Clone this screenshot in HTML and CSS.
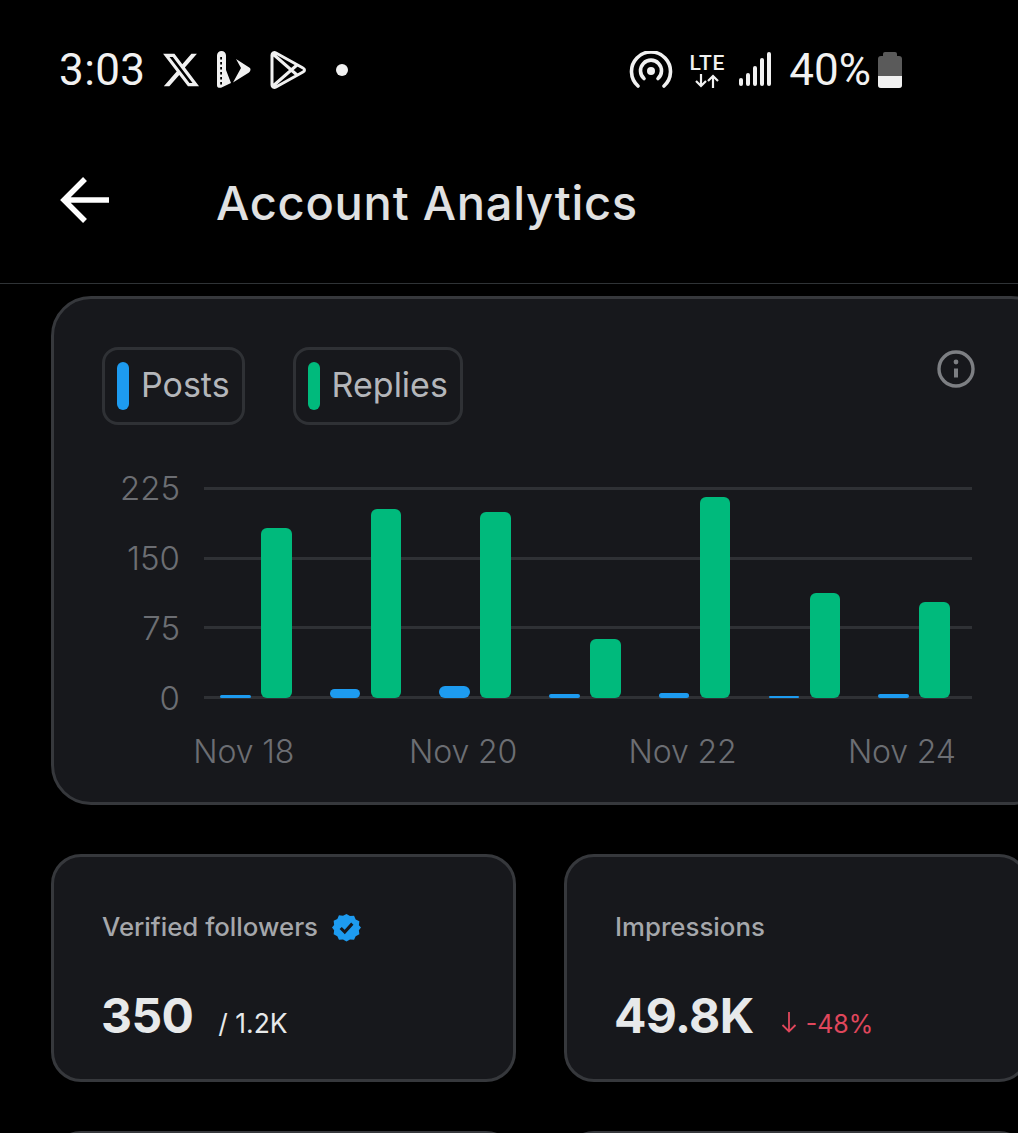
FILE: index.html
```html
<!DOCTYPE html>
<html lang="en">
<head>
<meta charset="utf-8">
<title>Account Analytics</title>
<link rel="stylesheet" href="styles.css">
</head>
<body>
<div class="screen">
  <div class="status">
    <div class="status-left">
      <span class="time">3:03</span>
      <svg class="ic-x" viewBox="0 0 24 24"><path fill="#f1f1f1" d="M18.244 2.25h3.308l-7.227 8.26 8.502 11.24H16.17l-5.214-6.817L4.99 21.75H1.68l7.73-8.835L1.254 2.25H8.08l4.713 6.231zm-1.161 17.52h1.833L7.084 4.126H5.117z"/></svg>
      <svg class="ic-b" viewBox="0 0 36 38"><path fill="#f1f1f1" d="M0 4.500a4.500 4.500 0 0 1 9 0V19l5 13-10 4.800q-4 .5-4-2.500z"/><path fill="#000" d="M3.200 6h1.800v2.500H3.200zM3.200 11h1.800v2.500H3.200zM3.200 16h1.800v2.500H3.200zM3.200 21h1.800v2.500H3.200zM3.200 26h1.800v2.500H3.200zM3.200 31h1.800v2.500H3.200z"/><path fill="#f1f1f1" d="M19 8l14 9c.8 1 .8 3-1 4.500L16 31.500l8-14.500z"/></svg>
      <svg class="ic-play" viewBox="0 0 38 40"><path fill="none" stroke="#f1f1f1" stroke-width="3" stroke-linejoin="round" d="M3 5c0-2 2-3 4-2l27 15c2 1 2 3 0 4L7 37c-2 1-4 0-4-2zM4 4l24 21M4 36l24-21"/></svg>
      <span class="dot"></span>
    </div>
    <div class="status-right">
      <svg class="ic-cast" viewBox="0 0 44 38"><g fill="none" stroke="#f1f1f1" stroke-width="3.600" stroke-linecap="round"><path d="M9 35A19.500 19.500 0 1 1 35 35"/><path d="M15 27.500A10.500 10.500 0 1 1 29 27.500"/></g><circle cx="22" cy="20" r="4" fill="#f1f1f1"/></svg>
      <div class="lte">
        <span class="lte-text">LTE</span>
        <svg class="ic-arrows" viewBox="0 0 26 14"><path fill="none" stroke="#f1f1f1" stroke-width="2.200" d="M7 0v12M2 7l5 5 5-5M19 14V2M14 7l5-5 5 5"/></svg>
      </div>
      <div class="signal"><i class="s1"></i><i class="s2"></i><i class="s3"></i><i class="s4"></i><i class="s5"></i></div>
      <span class="pct">40%</span>
      <div class="battery"><span class="cap"></span><span class="body"><span class="fill"></span></span></div>
    </div>
  </div>

  <header class="topbar">
    <svg class="back" viewBox="0 0 50 46"><path fill="none" stroke="#fff" stroke-width="5.500" d="M49 23H5M25 2 4 23l21 21"/></svg>
    <h1 class="title">Account Analytics</h1>
  </header>

  <main class="content">
    <section class="card chart-card">
      <div class="legend-row">
        <div class="chip"><span class="swatch blue"></span>Posts</div>
        <div class="chip"><span class="swatch green"></span>Replies</div>
        <svg class="info" viewBox="0 0 40 40"><circle cx="20" cy="20" r="17" fill="none" stroke="#7d7f83" stroke-width="3.400"/><circle cx="20" cy="13" r="2.400" fill="#7d7f83"/><path stroke="#7d7f83" stroke-width="4" d="M20 19.500v9"/></svg>
      </div>
      <div class="chart">
        <div class="y-axis"><span>225</span><span>150</span><span>75</span><span>0</span></div>
        <div class="plot">
          <div class="grid-lines"><i></i><i></i><i></i><i></i></div>
          <div class="bars">
            <div class="group"><span class="bar blue" style="height:3px"></span><span class="bar green" style="height:170px"></span></div>
            <div class="group"><span class="bar blue" style="height:9px"></span><span class="bar green" style="height:189px"></span></div>
            <div class="group"><span class="bar blue" style="height:12px"></span><span class="bar green" style="height:186px"></span></div>
            <div class="group"><span class="bar blue" style="height:4px"></span><span class="bar green" style="height:59px"></span></div>
            <div class="group"><span class="bar blue" style="height:5px"></span><span class="bar green" style="height:201px"></span></div>
            <div class="group"><span class="bar blue" style="height:2px"></span><span class="bar green" style="height:105px"></span></div>
            <div class="group"><span class="bar blue" style="height:4px"></span><span class="bar green" style="height:96px"></span></div>
          </div>
        </div>
      </div>
      <div class="x-axis"><span>Nov 18</span><span>Nov 20</span><span>Nov 22</span><span>Nov 24</span></div>
    </section>

    <div class="stats">
      <section class="card stat">
        <div class="stat-label">Verified followers
          <svg class="badge" viewBox="0 0 30 30"><path fill="#1d9bf0" d="M15 1l3.600 2.200 4.200-.4 1.700 3.800 3.800 1.900-.5 4.200L30 15l-2.200 2.900.5 4.200-3.800 1.900-1.700 3.800-4.200-.4L15 29.600l-3.600-2.200-4.200.4-1.700-3.800-3.800-1.900.5-4.200L0 15l2.200-2.700-.5-4.200 3.800-1.900 1.700-3.800 4.200.4z"/><path fill="none" stroke="#17181c" stroke-width="3.200" d="M9 15.500l4.200 4.200L21 11"/></svg>
        </div>
        <div class="stat-value"><span class="num">350</span><span class="sub">/ 1.2K</span></div>
      </section>
      <section class="card stat">
        <div class="stat-label">Impressions</div>
        <div class="stat-value"><span class="num">49.8K</span><span class="delta"><svg class="down" viewBox="0 0 16 21"><path fill="none" stroke="#e0475c" stroke-width="1.800" d="M8 0v19.500M1.500 13 8 19.500 14.500 13"/></svg>-48%</span></div>
      </section>
      <section class="card stat"></section>
      <section class="card stat"></section>
    </div>
  </main>
</div>
</body>
</html>
```

FILE: styles.css
```css
* { box-sizing: border-box; }
html, body { margin: 0; background: #000; }
.screen { width: 1018px; height: 1133px; overflow: hidden; background: #000; font-family: Inter, "Liberation Sans", sans-serif; color: #e7e9ea; }

.status { height: 140px; display: flex; justify-content: space-between; align-items: flex-start; padding: 43px 116px 0 59px; }
.status-left { display: flex; align-items: center; height: 54px; }
.time { font: 400 44px/54px Roboto, sans-serif; color: #f1f1f1; width: 102px; letter-spacing: .4px; }
.ic-x { width: 40px; height: 40px; }
.ic-b { width: 36px; height: 38px; margin-left: 16px; }
.ic-play { width: 38px; height: 40px; margin-left: 16px; }
.dot { width: 12px; height: 12px; border-radius: 50%; background: #f1f1f1; margin-left: 29px; }
.status-right { display: flex; align-items: center; height: 54px; }
.ic-cast { width: 44px; height: 38px; }
.lte { display: flex; flex-direction: column; align-items: center; margin-left: 16px; width: 36px; }
.lte-text { font: 500 21px/20px Roboto, sans-serif; color: #f1f1f1; letter-spacing: .8px; }
.ic-arrows { width: 26px; height: 14px; margin-top: 1px; }
.signal { display: flex; align-items: flex-end; gap: 3px; height: 34px; margin: 0 0 2px 14px; }
.signal i { display: block; width: 4px; background: #f1f1f1; border-radius: 2px; }
.s1 { height: 8px; } .s2 { height: 13px; } .s3 { height: 20px; } .s4 { height: 28px; } .s5 { height: 34px; }
.pct { font: 400 44px/54px Roboto, sans-serif; color: #f1f1f1; margin-left: 18px; }
.battery { display: flex; flex-direction: column; align-items: center; margin-left: 7px; width: 24px; }
.cap { width: 14px; height: 4px; background: #5a5a5a; border-radius: 2px 2px 0 0; }
.body { width: 24px; height: 32px; background: #5a5a5a; border-radius: 3px; overflow: hidden; display: flex; align-items: flex-end; }
.fill { width: 100%; height: 12px; background: #f1f1f1; }

.topbar { height: 144px; border-bottom: 1px solid #2f3336; display: flex; align-items: flex-start; padding: 37px 0 0 60px; }
.back { width: 50px; height: 46px; flex: none; }
.title { margin: -2px 0 0 106px; font: 500 47px/56px Inter, sans-serif; color: #e0e1e2; letter-spacing: .75px; }

.content { padding: 12px 0 0 51px; }
.card { background: #17181c; border: 3px solid #36383c; }
.chart-card { width: 1000px; height: 509px; border-radius: 40px; padding: 48px 0 0 48px; }
.legend-row { display: flex; gap: 48px; position: relative; width: 873px; }
.chip { display: flex; align-items: center; gap: 12px; height: 78px; padding: 0 12px 3px 12px; border: 3px solid #2f3135; border-radius: 16px; font-size: 34px; line-height: 72px; color: #b4b6ba; }
.swatch { width: 12px; height: 48px; border-radius: 6px; flex: none; margin-top: 3px; }
.blue { background: #1d9bf0; }
.green { background: #00ba7c; }
.info { width: 40px; height: 40px; position: absolute; right: -1px; top: 2px; }

.chart { display: flex; margin: 62px 0 0 0; height: 212px; }
.y-axis { width: 102px; flex: none; display: flex; flex-direction: column; justify-content: space-between; align-items: flex-end; padding: 0 24px 0 0; margin-top: -14px; height: 240px; font-size: 33px; line-height: 30px; font-weight: 300; color: #6c6e73; }
.plot { width: 768px; height: 212px; position: relative; }
.grid-lines { position: absolute; inset: 0; display: flex; flex-direction: column; justify-content: space-between; }
.grid-lines i { display: block; height: 3px; background: #2f3135; }
.bars { position: absolute; inset: 0 0 1px; display: flex; }
.group { flex: 1; display: flex; align-items: flex-end; gap: 10.5px; padding-left: 16px; }
.bar { width: 30.5px; display: block; border-radius: 6px; }

.x-axis { display: grid; grid-template-columns: repeat(4, 219.4px); justify-items: center; margin: 33px 0 0 32px; font-size: 32px; line-height: 40px; font-weight: 300; letter-spacing: -.15px; color: #6c6e73; }

.stats { display: grid; grid-template-columns: 465px 465px; column-gap: 48px; row-gap: 49px; margin-top: 49px; }
.stat { height: 228px; border-radius: 30px; padding: 50px 0 0 48px; }
.stat-label { display: flex; align-items: center; gap: 14px; font-size: 25.8px; font-weight: 500; line-height: 40px; color: #a5a7ab; height: 40px; }
.badge { width: 29px; height: 29px; }
.stat-value { display: flex; align-items: baseline; margin-top: 39px; height: 60px; }
.num { font-size: 48px; line-height: 60px; font-weight: 700; color: #e7e9ea; letter-spacing: -.6px; margin-left: -1px; }
.sub { font-size: 26.5px; color: #e7e9ea; margin-left: 25px; }
.delta { font-size: 25px; color: #e0475c; margin-left: 27px; display: flex; align-items: baseline; gap: 9px; }
.down { width: 16px; height: 21px; }
```
